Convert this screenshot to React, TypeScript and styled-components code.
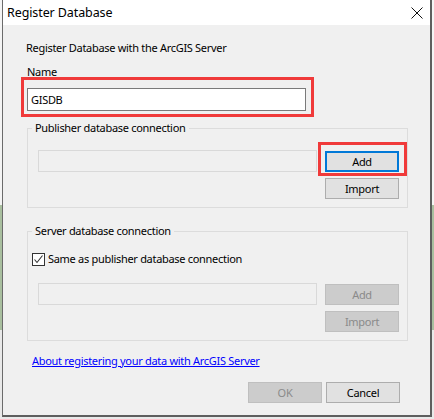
import React from 'react';
import styled, { createGlobalStyle } from 'styled-components';

const Global = createGlobalStyle`
  html, body { margin: 0; padding: 0; }
  body {
    background: linear-gradient(to bottom, #f4f4f4 0, #f4f4f4 205px, #a9bf9f 205px, #a9bf9f 330px, #e9e9e9 330px);
    font-family: "Segoe UI", "Noto Sans", "DejaVu Sans", sans-serif;
    color: #000;
  }
`;

const Screen = styled.div`
  width: 434px;
  height: 419px;
  overflow: hidden;
  box-sizing: border-box;
  padding-left: 2px;
`;

const Window = styled.div`
  width: 430px;
  height: 417px;
  box-sizing: border-box;
  border-left: 1px solid #6b6b6b;
  border-right: 2px solid #5e5e5e;
  border-bottom: 2px solid #5e5e5e;
  background: #f0f0f0;
  display: flex;
  flex-direction: column;
`;

const TitleBar = styled.div`
  height: 25px;
  flex: none;
  background: #fff;
  display: flex;
  align-items: center;
  justify-content: space-between;
  padding: 0 7px 0 4px;
  font-size: 12.5px;
  letter-spacing: -0.1px;
`;

const Body = styled.div`
  flex: 1;
  display: flex;
  flex-direction: column;
  align-items: flex-start;
  font-size: 11px;
  letter-spacing: -0.3px;
  line-height: 16px;
`;

const Text = styled.div<{ $top: number; $left: number }>`
  margin: ${(p) => p.$top}px 0 0 ${(p) => p.$left}px;
  line-height: 16px;
  white-space: nowrap;
`;

const RedFrame = styled.div`
  box-sizing: border-box;
  border: 3px solid #f03a3a;
`;

const NameFrame = styled(RedFrame)`
  margin: -3px 0 0 18px;
  width: 293px;
  height: 40px;
  padding: 8px 0 0 3px;
`;

const TextBox = styled.div<{ $disabled?: boolean }>`
  box-sizing: border-box;
  width: 279px;
  height: ${(p) => (p.$disabled ? 22 : 23)}px;
  border: 1px solid ${(p) => (p.$disabled ? '#d9d9d9' : '#7a7a7a')};
  background: ${(p) => (p.$disabled ? '#f0f0f0' : '#fff')};
  padding-left: 3px;
  display: flex;
  align-items: center;
`;

const Group = styled.fieldset<{ $top: number }>`
  box-sizing: border-box;
  width: 381px;
  margin: ${(p) => p.$top}px 0 0 24px;
  padding: 0 0 8px 0;
  border: 1px solid #dcdcdc;
  min-inline-size: 0;
`;

const Legend = styled.legend`
  padding: 0 3px;
  margin-left: 4px;
  line-height: 16px;
`;

const Row = styled.div<{ $top: number }>`
  display: flex;
  align-items: flex-start;
  padding-left: 10px;
  margin-top: ${(p) => p.$top}px;
`;

const ButtonCol = styled.div<{ $left: number }>`
  display: flex;
  flex-direction: column;
  align-items: flex-start;
  margin-left: ${(p) => p.$left}px;
`;

const Button = styled.div<{ $disabled?: boolean; $focus?: boolean; $top?: number; $left?: number }>`
  box-sizing: border-box;
  width: 74px;
  height: 21px;
  margin: ${(p) => p.$top ?? 0}px 0 0 ${(p) => p.$left ?? 0}px;
  display: flex;
  align-items: center;
  justify-content: center;
  font-size: 11px;
  background: ${(p) => (p.$disabled ? '#cccccc' : '#e1e1e1')};
  color: ${(p) => (p.$disabled ? '#8a8a8a' : '#000')};
  border: ${(p) => (p.$focus ? '2px solid #0078d7' : p.$disabled ? '1px solid #bfbfbf' : '1px solid #adadad')};
`;

const AddFrame = styled(RedFrame)`
  padding: 6px 5px 1px 4px;
`;

const CheckRow = styled.label`
  display: flex;
  align-items: center;
  gap: 3px;
  margin: 12px 0 0 4px;
  line-height: 16px;
`;

const CheckBox = styled.span`
  box-sizing: border-box;
  width: 13px;
  height: 13px;
  border: 1px solid #333;
  background: #fff;
  display: flex;
`;

const Link = styled.a`
  margin: 12px 0 0 29px;
  color: #0000ff;
  text-decoration: underline;
  line-height: 16px;
  white-space: nowrap;
  cursor: pointer;
`;

const Footer = styled.div`
  align-self: flex-end;
  display: flex;
  gap: 4px;
  margin: 13px 30px 0 0;
`;

export default function App() {
  return (
    <>
      <Global />
      <Screen>
        <Window>
          <TitleBar>
            <span>Register Database</span>
            <svg width="12" height="12" viewBox="0 0 12 12">
              <path d="M0.5 0.5 L11.5 11.5 M11.5 0.5 L0.5 11.5" stroke="#111" strokeWidth="1" />
            </svg>
          </TitleBar>
          <Body>
            <Text $top={15} $left={23}>Register Database with the ArcGIS Server</Text>
            <Text $top={8} $left={24}>Name</Text>
            <NameFrame>
              <TextBox>GISDB</TextBox>
            </NameFrame>
            <Group $top={3}>
              <Legend>Publisher database connection</Legend>
              <Row $top={6}>
                <TextBox $disabled style={{ marginTop: 8 }} />
                <ButtonCol $left={1}>
                  <AddFrame>
                    <Button $focus>Add</Button>
                  </AddFrame>
                  <Button $top={2} $left={7}>Import</Button>
                </ButtonCol>
              </Row>
            </Group>
            <Group $top={15}>
              <Legend>Server database connection</Legend>
              <CheckRow>
                <CheckBox>
                  <svg width="11" height="11" viewBox="0 0 11 11">
                    <path d="M1.5 5.5 L4 8.5 L9.5 1.5" stroke="#333" strokeWidth="1.1" fill="none" />
                  </svg>
                </CheckBox>
                <span>Same as publisher database connection</span>
              </CheckRow>
              <Row $top={16}>
                <TextBox $disabled />
                <ButtonCol $left={8}>
                  <Button $disabled $top={1}>Add</Button>
                  <Button $disabled $top={6}>Import</Button>
                </ButtonCol>
              </Row>
            </Group>
            <Link>About registering your data with ArcGIS Server</Link>
            <Footer>
              <Button $disabled>OK</Button>
              <Button>Cancel</Button>
            </Footer>
          </Body>
        </Window>
      </Screen>
    </>
  );
}
